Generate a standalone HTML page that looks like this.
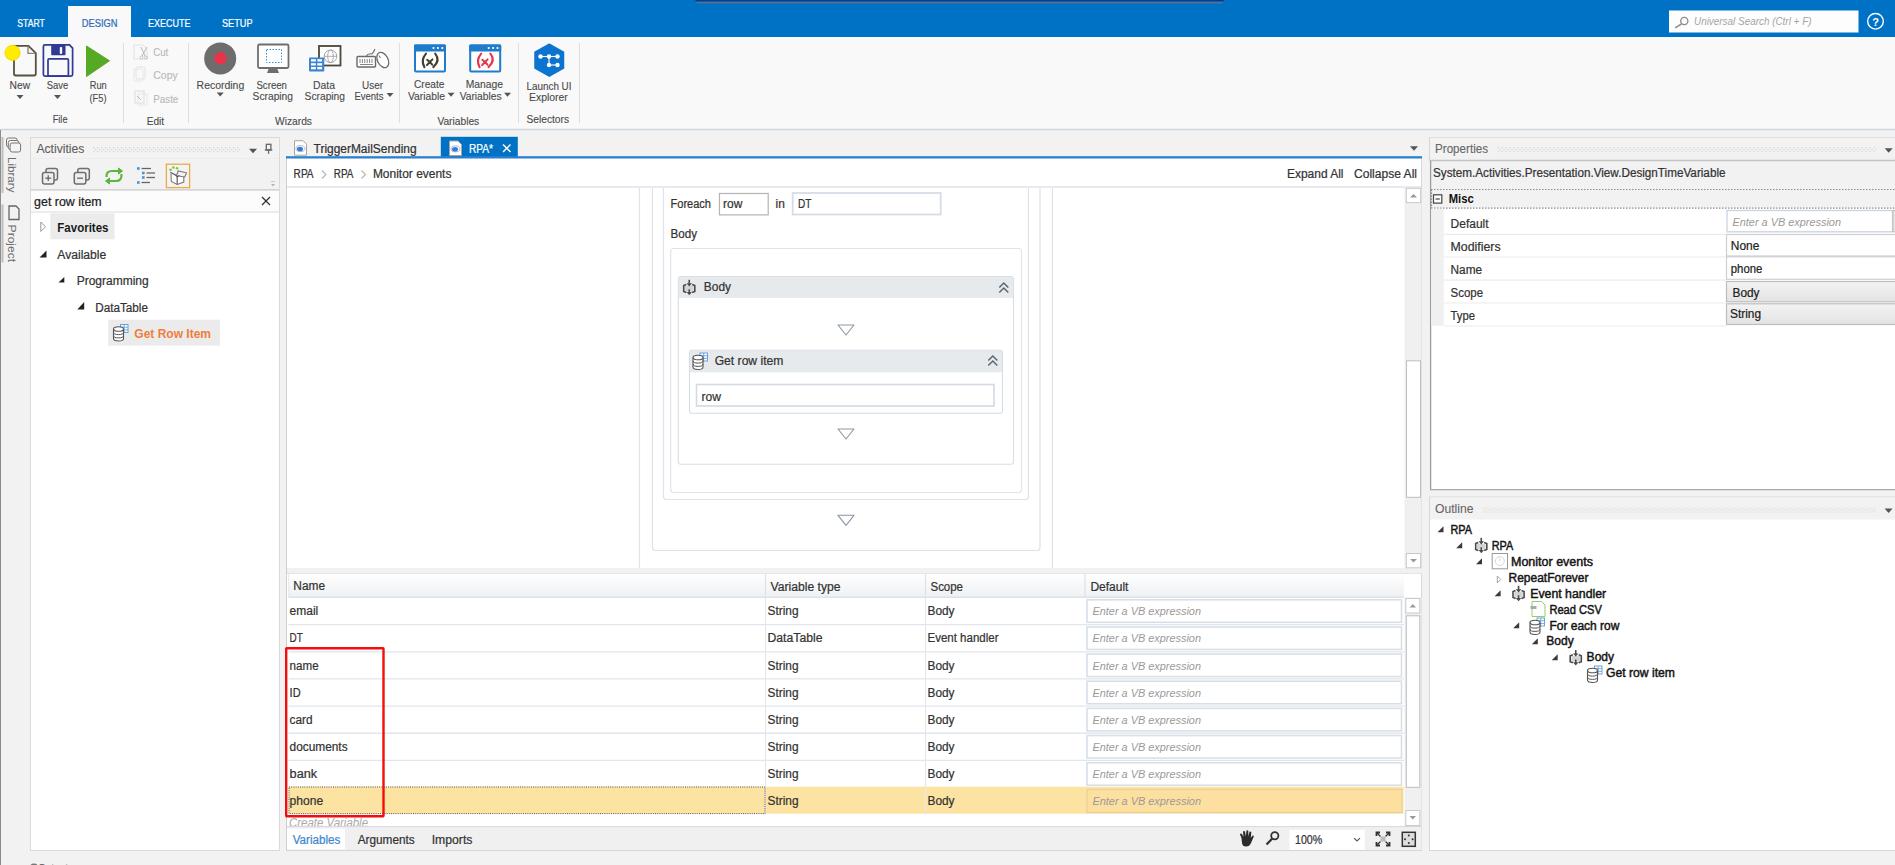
<!DOCTYPE html><html><head><meta charset="utf-8"><style>html,body{margin:0;padding:0;width:1895px;height:865px;overflow:hidden;background:#f2f2f2}svg{display:block;font-family:"Liberation Sans",sans-serif}</style></head><body><svg width="1895" height="865" viewBox="0 0 1895 865"><rect x="0" y="0" width="1895" height="865" fill="#f2f2f2"/>
<rect x="0" y="0" width="1895" height="37" fill="#0072c6"/>
<linearGradient id="tb" x1="0" y1="0" x2="0" y2="1"><stop offset="0" stop-color="#003f8f"/><stop offset="0.3" stop-color="#003f8f"/><stop offset="0.5" stop-color="#4474b4"/><stop offset="0.75" stop-color="#5a7090"/><stop offset="1" stop-color="#2a68a0"/></linearGradient>
<path d="M695,0 L1224.5,0 L1222,3.8 L697.5,3.8 Z" fill="url(#tb)"/>
<rect x="68" y="6" width="63" height="31" fill="#f9f9f9"/>
<text x="17.3" y="26.6" font-size="10.6" fill="#fff" stroke="#fff" stroke-width="0.22" textLength="27.5" lengthAdjust="spacingAndGlyphs">START</text>
<text x="81.8" y="26.6" font-size="10.6" fill="#2b6cb5" stroke="#2b6cb5" stroke-width="0.22" textLength="35.8" lengthAdjust="spacingAndGlyphs">DESIGN</text>
<text x="148" y="26.6" font-size="10.6" fill="#fff" stroke="#fff" stroke-width="0.22" textLength="42.5" lengthAdjust="spacingAndGlyphs">EXECUTE</text>
<text x="222" y="26.6" font-size="10.6" fill="#fff" stroke="#fff" stroke-width="0.22" textLength="30.5" lengthAdjust="spacingAndGlyphs">SETUP</text>
<rect x="1669" y="10.5" width="189.5" height="22" fill="#fdfdfd"/>
<circle cx="1684.3" cy="21" r="3.6" fill="none" stroke="#8a8a8a" stroke-width="1.3"/>
<line x1="1681.5" y1="23.8" x2="1675.3" y2="27.8" stroke="#8a8a8a" stroke-width="1.6"/>
<text x="1694" y="25.4" font-size="11" fill="#a5a5a5" textLength="117.5" lengthAdjust="spacingAndGlyphs" font-style="italic">Universal Search (Ctrl + F)</text>
<circle cx="1875.5" cy="21.3" r="7.8" fill="none" stroke="#fff" stroke-width="1.4"/>
<text x="1875.5" y="25.5" font-size="11" fill="#fff" font-weight="bold" text-anchor="middle">?</text>
<rect x="0" y="37" width="1895" height="92" fill="#f9f9f9"/>
<line x1="0" y1="129.5" x2="1895" y2="129.5" stroke="#cdd6df" stroke-width="1.5"/>
<line x1="123.5" y1="43" x2="123.5" y2="123" stroke="#dedede" stroke-width="1"/>
<line x1="188.5" y1="43" x2="188.5" y2="123" stroke="#dedede" stroke-width="1"/>
<line x1="399.5" y1="43" x2="399.5" y2="123" stroke="#dedede" stroke-width="1"/>
<line x1="518.5" y1="43" x2="518.5" y2="123" stroke="#dedede" stroke-width="1"/>
<line x1="579.5" y1="43" x2="579.5" y2="123" stroke="#dedede" stroke-width="1"/>
<path d="M14,45.8 L28.5,45.8 L35.8,53.2 L35.8,73.8 Q35.8,75.5 34,75.5 L15.8,75.5 Q14,75.5 14,73.8 Z" fill="#f9f9f9" stroke="#57523f" stroke-width="1.8"/>
<path d="M28,46 L28,53.4 L35.5,53.4" fill="none" stroke="#8a8676" stroke-width="1.4"/>
<circle cx="12.5" cy="52.8" r="7.6" fill="#ffec00" stroke="#f5d300" stroke-width="0.8"/>
<text x="9.6" y="89.3" font-size="11" fill="#4a4a4a" stroke="#4a4a4a" stroke-width="0.12" textLength="20.5" lengthAdjust="spacingAndGlyphs">New</text>
<path d="M16.5,95.0 L23.5,95.0 L20,99.0 Z" fill="#555"/>
<path d="M45,44.9 L69.5,44.9 L72.6,48.2 L72.6,74.6 Q72.6,76.2 71,76.2 L45,76.2 Q43.4,76.2 43.4,74.6 L43.4,46.5 Q43.4,44.9 45,44.9 Z" fill="none" stroke="#2e3a94" stroke-width="1.7"/>
<rect x="51.2" y="44.9" width="14.3" height="10.3" fill="#2e3a94" rx="1"/>
<rect x="59.8" y="47" width="2.4" height="6.9" fill="#f9f9f9" rx="0.8"/>
<rect x="48" y="58.9" width="20.4" height="17.3" fill="none" stroke="#2e3a94" stroke-width="1.7" rx="1.2"/>
<text x="46.8" y="89.3" font-size="11" fill="#4a4a4a" stroke="#4a4a4a" stroke-width="0.12" textLength="21.5" lengthAdjust="spacingAndGlyphs">Save</text>
<path d="M54.0,95.0 L61.0,95.0 L57.5,99.0 Z" fill="#555"/>
<path d="M86.5,46 L109.5,60.8 L86.5,76.5 Z" fill="#56a922" stroke="#56a922" stroke-width="1" stroke-linejoin="round"/>
<text x="89.7" y="89.3" font-size="11" fill="#4a4a4a" stroke="#4a4a4a" stroke-width="0.12" textLength="17" lengthAdjust="spacingAndGlyphs">Run</text>
<text x="89.5" y="101.8" font-size="11" fill="#4a4a4a" stroke="#4a4a4a" stroke-width="0.12" textLength="17" lengthAdjust="spacingAndGlyphs">(F5)</text>
<text x="52.7" y="123" font-size="11" fill="#4a4a4a" stroke="#4a4a4a" stroke-width="0.12" textLength="14.8" lengthAdjust="spacingAndGlyphs">File</text>
<path d="M134,45 L143,45 L147,49 L147,59 L134,59 Z" fill="none" stroke="#e2e2e2" stroke-width="1"/>
<line x1="141" y1="47" x2="145" y2="56" stroke="#b8b8b8" stroke-width="1"/>
<line x1="147" y1="47" x2="142" y2="56" stroke="#b8b8b8" stroke-width="1"/>
<circle cx="141.5" cy="57.5" r="1.5" fill="none" stroke="#b8b8b8" stroke-width="0.8"/><circle cx="146" cy="57.5" r="1.5" fill="none" stroke="#b8b8b8" stroke-width="0.8"/>
<text x="153.3" y="56" font-size="11" fill="#b8b8b8" stroke="#b8b8b8" stroke-width="0.12" textLength="15" lengthAdjust="spacingAndGlyphs">Cut</text>
<rect x="136" y="67" width="9" height="12" fill="none" stroke="#e2e2e2" stroke-width="1" rx="1.5"/>
<rect x="134" y="69" width="9" height="12" fill="none" stroke="#e6e6e6" stroke-width="1" rx="1.5"/>
<text x="153.3" y="79" font-size="11" fill="#b8b8b8" stroke="#b8b8b8" stroke-width="0.12" textLength="24.5" lengthAdjust="spacingAndGlyphs">Copy</text>
<rect x="135" y="91" width="9" height="12" fill="none" stroke="#dcdcdc" stroke-width="1"/>
<rect x="138" y="94" width="9" height="11" fill="none" stroke="#e6e6e6" stroke-width="1"/>
<line x1="137" y1="96" x2="141" y2="100" stroke="#b8b8b8" stroke-width="1"/>
<text x="153.3" y="103" font-size="11" fill="#b8b8b8" stroke="#b8b8b8" stroke-width="0.12" textLength="25" lengthAdjust="spacingAndGlyphs">Paste</text>
<text x="146.7" y="125" font-size="11" fill="#4a4a4a" stroke="#4a4a4a" stroke-width="0.12" textLength="17.3" lengthAdjust="spacingAndGlyphs">Edit</text>
<circle cx="220.2" cy="58.4" r="16" fill="#6d6d6d"/><circle cx="220.5" cy="58.3" r="6.2" fill="#e8334a"/>
<text x="196.6" y="88.8" font-size="11" fill="#4a4a4a" stroke="#4a4a4a" stroke-width="0.12" textLength="47.6" lengthAdjust="spacingAndGlyphs">Recording</text>
<path d="M216.7,92.6 L223.7,92.6 L220.2,96.6 Z" fill="#555"/>
<rect x="258" y="44.5" width="30.5" height="23.5" fill="#fff" stroke="#6e6e6e" stroke-width="1.8" rx="1.5"/>
<rect x="266.5" y="49.5" width="15" height="13" fill="none" stroke="#3f8fd8" stroke-width="1" stroke-dasharray="1.5,1.5"/>
<path d="M269,68 L277,68 L279,73 L267,73 Z" fill="#6e6e6e"/>
<text x="256.4" y="88.8" font-size="11" fill="#4a4a4a" stroke="#4a4a4a" stroke-width="0.12" textLength="30.6" lengthAdjust="spacingAndGlyphs">Screen</text>
<text x="252.6" y="99.8" font-size="11" fill="#4a4a4a" stroke="#4a4a4a" stroke-width="0.12" textLength="40.4" lengthAdjust="spacingAndGlyphs">Scraping</text>
<rect x="319" y="46" width="21.5" height="19.5" fill="#fff" stroke="#4a4638" stroke-width="1.8"/>
<circle cx="330.5" cy="56.3" r="6.3" fill="none" stroke="#9a9a9a" stroke-width="0.9"/>
<ellipse cx="330.5" cy="56.3" rx="2.8" ry="6.3" fill="none" stroke="#9a9a9a" stroke-width="0.8"/>
<line x1="324.2" y1="56.3" x2="336.8" y2="56.3" stroke="#9a9a9a" stroke-width="0.8"/>
<rect x="309" y="57.5" width="15.3" height="14" fill="#3d84d1" rx="1"/>
<rect x="311" y="59.2" width="4.8" height="2.3" fill="#fff"/>
<rect x="317.3" y="59.2" width="4.8" height="2.3" fill="#fff"/>
<rect x="311" y="63.2" width="4.8" height="2.3" fill="#fff"/>
<rect x="317.3" y="63.2" width="4.8" height="2.3" fill="#fff"/>
<rect x="311" y="67.0" width="4.8" height="2.3" fill="#fff"/>
<rect x="317.3" y="67.0" width="4.8" height="2.3" fill="#fff"/>
<text x="313" y="88.8" font-size="11" fill="#4a4a4a" stroke="#4a4a4a" stroke-width="0.12" textLength="22" lengthAdjust="spacingAndGlyphs">Data</text>
<text x="304.6" y="99.8" font-size="11" fill="#4a4a4a" stroke="#4a4a4a" stroke-width="0.12" textLength="40.4" lengthAdjust="spacingAndGlyphs">Scraping</text>
<rect x="357" y="56.5" width="18.5" height="10.5" fill="#fff" stroke="#6a6a6a" stroke-width="1.4" rx="1"/>
<line x1="360.0" y1="59" x2="360.0" y2="63" stroke="#777" stroke-width="0.9"/>
<line x1="362.4" y1="59" x2="362.4" y2="63" stroke="#777" stroke-width="0.9"/>
<line x1="364.8" y1="59" x2="364.8" y2="63" stroke="#777" stroke-width="0.9"/>
<line x1="367.2" y1="59" x2="367.2" y2="63" stroke="#777" stroke-width="0.9"/>
<line x1="369.6" y1="59" x2="369.6" y2="63" stroke="#777" stroke-width="0.9"/>
<line x1="372.0" y1="59" x2="372.0" y2="63" stroke="#777" stroke-width="0.9"/>
<line x1="360" y1="64.5" x2="373" y2="64.5" stroke="#777" stroke-width="0.9"/>
<path d="M366,56.5 Q368,53 372,54 Q374,51.5 375,49" fill="none" stroke="#6a6a6a" stroke-width="1.1"/>
<ellipse cx="382.8" cy="60" rx="5.2" ry="8.2" transform="rotate(-28 382.8 60)" fill="#fff" stroke="#6a6a6a" stroke-width="1.3"/>
<line x1="379" y1="55.5" x2="380.5" y2="58" stroke="#6a6a6a" stroke-width="1"/>
<text x="362" y="88.8" font-size="11" fill="#4a4a4a" stroke="#4a4a4a" stroke-width="0.12" textLength="21" lengthAdjust="spacingAndGlyphs">User</text>
<text x="354.5" y="99.8" font-size="11" fill="#4a4a4a" stroke="#4a4a4a" stroke-width="0.12" textLength="29" lengthAdjust="spacingAndGlyphs">Events</text>
<path d="M386.5,93.0 L393.5,93.0 L390,97.0 Z" fill="#555"/>
<text x="275" y="125.4" font-size="11" fill="#4a4a4a" stroke="#4a4a4a" stroke-width="0.12" textLength="37" lengthAdjust="spacingAndGlyphs">Wizards</text>
<rect x="415" y="45.5" width="30" height="26" fill="#fff" stroke="#1f7bcb" stroke-width="2" rx="1"/>
<rect x="414" y="44.5" width="32" height="7" fill="#1f7bcb" rx="1"/>
<circle cx="433.5" cy="48" r="1.1" fill="#fff"/>
<circle cx="437.9" cy="48" r="1.1" fill="#fff"/>
<circle cx="442.3" cy="48" r="1.1" fill="#fff"/>
<path d="M426,53.6 Q420.3,60.4 424.4,67.1 M435.2,53.6 Q440.7,60.4 433.3,67.1" fill="none" stroke="#44402f" stroke-width="2.1" stroke-linecap="round"/>
<path d="M427.2,59.8 Q430,61.5 432.2,64.6 M432.4,59.4 Q429.5,61.8 427,65.2" fill="none" stroke="#44402f" stroke-width="2" stroke-linecap="round"/>
<text x="414" y="88.2" font-size="11" fill="#4a4a4a" stroke="#4a4a4a" stroke-width="0.12" textLength="30.5" lengthAdjust="spacingAndGlyphs">Create</text>
<text x="408" y="99.6" font-size="11" fill="#4a4a4a" stroke="#4a4a4a" stroke-width="0.12" textLength="37" lengthAdjust="spacingAndGlyphs">Variable</text>
<path d="M447.5,92.7 L454.5,92.7 L451,96.7 Z" fill="#555"/>
<rect x="470.2" y="45.5" width="30" height="26" fill="#fff" stroke="#1f7bcb" stroke-width="2" rx="1"/>
<rect x="469.2" y="44.5" width="32" height="7" fill="#1f7bcb" rx="1"/>
<circle cx="488.7" cy="48" r="1.1" fill="#fff"/>
<circle cx="493.09999999999997" cy="48" r="1.1" fill="#fff"/>
<circle cx="497.5" cy="48" r="1.1" fill="#fff"/>
<path d="M481.2,53.6 Q475.5,60.4 479.59999999999997,67.1 M490.4,53.6 Q495.9,60.4 488.5,67.1" fill="none" stroke="#e8334a" stroke-width="2.1" stroke-linecap="round"/>
<path d="M482.4,59.8 Q485.2,61.5 487.4,64.6 M487.59999999999997,59.4 Q484.7,61.8 482.2,65.2" fill="none" stroke="#e8334a" stroke-width="2" stroke-linecap="round"/>
<text x="465.7" y="88.2" font-size="11" fill="#4a4a4a" stroke="#4a4a4a" stroke-width="0.12" textLength="37.3" lengthAdjust="spacingAndGlyphs">Manage</text>
<text x="459.7" y="99.6" font-size="11" fill="#4a4a4a" stroke="#4a4a4a" stroke-width="0.12" textLength="41.8" lengthAdjust="spacingAndGlyphs">Variables</text>
<path d="M504.0,92.7 L511.0,92.7 L507.5,96.7 Z" fill="#555"/>
<text x="437.4" y="125" font-size="11" fill="#4a4a4a" stroke="#4a4a4a" stroke-width="0.12" textLength="41.8" lengthAdjust="spacingAndGlyphs">Variables</text>
<path d="M549.3,44.2 L563.5,52.2 L563.5,68.2 L549.3,76.2 L535,68.2 L535,52.2 Z" fill="#0c74cf" stroke="#0c74cf" stroke-width="1.5" stroke-linejoin="round"/>
<circle cx="540.5" cy="56.5" r="2.2" fill="#fff"/>
<circle cx="549" cy="56.5" r="2.2" fill="#fff"/>
<circle cx="557.5" cy="56.5" r="2.2" fill="#fff"/>
<circle cx="549" cy="65" r="2.2" fill="#fff"/>
<circle cx="557.5" cy="65" r="2.2" fill="#fff"/>
<line x1="540.5" y1="56.5" x2="557.5" y2="56.5" stroke="#fff" stroke-width="1.1"/>
<line x1="549" y1="56.5" x2="549" y2="65" stroke="#fff" stroke-width="1.1"/>
<line x1="549" y1="65" x2="557.5" y2="65" stroke="#fff" stroke-width="1.1"/>
<text x="526.5" y="89.8" font-size="11" fill="#4a4a4a" stroke="#4a4a4a" stroke-width="0.12" textLength="45" lengthAdjust="spacingAndGlyphs">Launch UI</text>
<text x="529" y="101.2" font-size="11" fill="#4a4a4a" stroke="#4a4a4a" stroke-width="0.12" textLength="38.8" lengthAdjust="spacingAndGlyphs">Explorer</text>
<text x="526.5" y="123" font-size="11" fill="#4a4a4a" stroke="#4a4a4a" stroke-width="0.12" textLength="42.5" lengthAdjust="spacingAndGlyphs">Selectors</text>
<rect x="0" y="130" width="1" height="735" fill="#8c8c8c"/>
<rect x="1.5" y="137" width="2" height="56" fill="#bdbdbd"/>
<rect x="1.5" y="204.5" width="2" height="58" fill="#bdbdbd"/>
<rect x="6.5" y="138.0" width="10.5" height="9" fill="#f4f4f4" stroke="#777" stroke-width="1" rx="2"/>
<rect x="8.3" y="140.5" width="10.5" height="9" fill="#f4f4f4" stroke="#777" stroke-width="1" rx="2"/>
<rect x="10.1" y="143.0" width="10.5" height="9" fill="#f4f4f4" stroke="#777" stroke-width="1" rx="2"/>
<text x="0" y="0" font-size="11.5" fill="#6a6a6a" textLength="35.5" lengthAdjust="spacingAndGlyphs" transform="translate(8.3,157) rotate(90)">Library</text>
<path d="M9,206 L16,206 L19,209 L19,219.5 L9,219.5 Z" fill="none" stroke="#666" stroke-width="1.3"/>
<text x="0" y="0" font-size="11.5" fill="#6a6a6a" textLength="37.5" lengthAdjust="spacingAndGlyphs" transform="translate(8.3,224.6) rotate(90)">Project</text>
<circle cx="34" cy="868.5" r="5" fill="#777"/>
<text x="38" y="872.2" font-size="11.5" fill="#555" stroke="#555" stroke-width="0.22" textLength="30" lengthAdjust="spacingAndGlyphs">Output</text>
<rect x="30.5" y="137.5" width="249" height="713" fill="#fff" stroke="#dadada" stroke-width="1"/>
<rect x="31" y="138" width="248" height="22" fill="#f3f3f3"/>
<text x="36.4" y="153.4" font-size="12" fill="#606060" stroke="#606060" stroke-width="0.1" textLength="48" lengthAdjust="spacingAndGlyphs">Activities</text>
<pattern id="g1" x="93" y="147" width="4" height="4" patternUnits="userSpaceOnUse"><rect width="4" height="4" fill="#f2f2f2"/><rect x="0" y="0" width="1.3" height="1.3" fill="#d6d6d6"/><rect x="2" y="2" width="1.3" height="1.3" fill="#d6d6d6"/></pattern>
<rect x="93" y="147" width="147" height="5.4" fill="url(#g1)"/>
<path d="M249.0,148.75 L257.0,148.75 L253,153.25 Z" fill="#555"/>
<rect x="266.3" y="144.3" width="4.6" height="5.5" fill="none" stroke="#666" stroke-width="1.3"/>
<line x1="264.8" y1="150" x2="272.3" y2="150" stroke="#666" stroke-width="1.3"/>
<line x1="268.6" y1="150" x2="268.6" y2="153.8" stroke="#666" stroke-width="1.3"/>
<rect x="31" y="160" width="248" height="29.5" fill="#f2f2f2"/>
<line x1="31" y1="158.5" x2="279" y2="158.5" stroke="#ececec" stroke-width="1"/>
<rect x="46" y="168.5" width="11.5" height="11.5" fill="#eee" stroke="#6e6e6e" stroke-width="1.5" rx="2"/>
<rect x="42.5" y="172.5" width="11.5" height="11.5" fill="#eee" stroke="#6e6e6e" stroke-width="1.5" rx="2"/>
<line x1="45.3" y1="178.2" x2="51.2" y2="178.2" stroke="#6e6e6e" stroke-width="1.4"/>
<line x1="48.25" y1="175.3" x2="48.25" y2="181.1" stroke="#6e6e6e" stroke-width="1.4"/>
<rect x="77.8" y="168.5" width="11.5" height="11.5" fill="#eee" stroke="#6e6e6e" stroke-width="1.5" rx="2"/>
<rect x="74.3" y="172.5" width="11.5" height="11.5" fill="#eee" stroke="#6e6e6e" stroke-width="1.5" rx="2"/>
<line x1="77.1" y1="178.2" x2="83.0" y2="178.2" stroke="#6e6e6e" stroke-width="1.4"/>
<path d="M106.5,177 Q106,171 112,171 L120.5,171" fill="none" stroke="#5cb63c" stroke-width="2.2"/>
<path d="M118.5,168 L122.5,171 L118.5,174 Z" fill="#5cb63c" stroke="#5cb63c" stroke-width="1"/>
<path d="M121.5,174 Q122,181 116,181 L107.5,181" fill="none" stroke="#5cb63c" stroke-width="2.2"/>
<path d="M109.5,178 L105.5,181 L109.5,184 Z" fill="#5cb63c" stroke="#5cb63c" stroke-width="1"/>
<rect x="137" y="167.2" width="2.6" height="2.6" fill="#4a90e2"/>
<line x1="141.5" y1="168.5" x2="151" y2="168.5" stroke="#666" stroke-width="1.3"/>
<rect x="142" y="171.7" width="2.6" height="2.6" fill="#4a90e2"/>
<line x1="146.5" y1="173" x2="155" y2="173" stroke="#666" stroke-width="1.3"/>
<rect x="142" y="176.2" width="2.6" height="2.6" fill="#4a90e2"/>
<line x1="146.5" y1="177.5" x2="155" y2="177.5" stroke="#666" stroke-width="1.3"/>
<rect x="137" y="181.2" width="2.6" height="2.6" fill="#4a90e2"/>
<line x1="141.5" y1="182.5" x2="150" y2="182.5" stroke="#666" stroke-width="1.3"/>
<rect x="166.4" y="164.2" width="23.2" height="23.4" fill="#f3f3f3" stroke="#eaa94a" stroke-width="1.3"/>
<path d="M171,174 L171.3,181.5 L177.2,184.5 L183.8,182 L183.8,176" fill="#fff" stroke="#7a7a7a" stroke-width="1.1"/>
<path d="M177.2,176 L177.2,184.5" fill="none" stroke="#6a6a6a" stroke-width="1.3"/>
<path d="M170.3,172.3 L177.2,175.8 L182.5,174.2" fill="none" stroke="#6a6a6a" stroke-width="1.3"/>
<path d="M176.5,175.5 L178.2,171 L186.5,172.8 L184.8,177 L178,176" fill="#f3f3f3" stroke="#7a7a7a" stroke-width="1.1"/>
<path d="M174.5,174.5 L177.2,175.8 L180.5,175 L177.2,177.5 Z" fill="#555"/>
<circle cx="170.5" cy="169.8" r="1.3" fill="#7ac943"/>
<circle cx="173.4" cy="167.5" r="1.3" fill="#7ac943"/>
<circle cx="177.1" cy="168.3" r="1.3" fill="#7ac943"/>
<path d="M271,184 L275,184 L273,186.5 Z" fill="#b0b0b0"/>
<line x1="271" y1="181.5" x2="275" y2="181.5" stroke="#c0c0c0" stroke-width="0.8"/>
<line x1="31" y1="190" x2="279" y2="190" stroke="#c9c9c9" stroke-width="1.5"/>
<rect x="31" y="190.7" width="248" height="21" fill="#fcfcfc"/>
<line x1="31" y1="212" x2="279" y2="212" stroke="#dcdcdc" stroke-width="1.2"/>
<text x="34.1" y="206.3" font-size="12" fill="#222" stroke="#222" stroke-width="0.22" textLength="67.6" lengthAdjust="spacingAndGlyphs">get row item</text>
<line x1="262" y1="197" x2="270" y2="205" stroke="#333" stroke-width="1.3"/>
<line x1="270" y1="197" x2="262" y2="205" stroke="#333" stroke-width="1.3"/>
<rect x="50.3" y="213.3" width="64.2" height="26" fill="#ebebeb"/>
<path d="M40.8,222 L45.5,226.8 L40.8,231.5 Z" fill="none" stroke="#9a9a9a" stroke-width="1"/>
<text x="57.3" y="231.5" font-size="12" fill="#1a1a1a" textLength="51.2" lengthAdjust="spacingAndGlyphs" font-weight="bold">Favorites</text>
<path d="M46.5,250.6 L46.5,257.6 L39.5,257.6 Z" fill="#222"/>
<text x="57.3" y="259.3" font-size="12" fill="#333" stroke="#333" stroke-width="0.22" textLength="49" lengthAdjust="spacingAndGlyphs">Available</text>
<path d="M64.3,277 L64.3,282.6 L58.5,282.6 Z" fill="#222"/>
<text x="76.7" y="285.4" font-size="12" fill="#333" stroke="#333" stroke-width="0.22" textLength="72" lengthAdjust="spacingAndGlyphs">Programming</text>
<path d="M84.2,302 L84.2,309.4 L77.3,309.4 Z" fill="#222"/>
<text x="95.2" y="311.5" font-size="12" fill="#333" stroke="#333" stroke-width="0.22" textLength="52.8" lengthAdjust="spacingAndGlyphs">DataTable</text>
<rect x="108.2" y="319.7" width="111.8" height="26" fill="#ebebeb"/>
<g transform="translate(112.5,324) scale(1.0)"><rect x="8" y="0.5" width="7.5" height="8" fill="#fff" stroke="#5b9bd5" stroke-width="0.9"/><line x1="11.7" y1="0.5" x2="11.7" y2="8.5" stroke="#5b9bd5" stroke-width="0.8"/><line x1="8" y1="3.2" x2="15.5" y2="3.2" stroke="#5b9bd5" stroke-width="0.8"/><line x1="8" y1="5.9" x2="15.5" y2="5.9" stroke="#5b9bd5" stroke-width="0.8"/><path d="M1,5 L1,14.5 Q1,17 6,17 Q11,17 11,14.5 L11,5" fill="#fff" stroke="#555" stroke-width="1.1"/><ellipse cx="6" cy="5" rx="5" ry="2.3" fill="#fff" stroke="#555" stroke-width="1.1"/><path d="M1,8.3 Q1,10.6 6,10.6 Q11,10.6 11,8.3 M1,11.6 Q1,13.9 6,13.9 Q11,13.9 11,11.6" fill="none" stroke="#555" stroke-width="1"/></g>
<text x="134.3" y="337.5" font-size="12" fill="#f07d3e" textLength="76.7" lengthAdjust="spacingAndGlyphs" font-weight="bold">Get Row Item</text>
<rect x="286" y="158" width="1136" height="692.5" fill="#fff"/>
<line x1="286.5" y1="156" x2="286.5" y2="851" stroke="#cfcfcf" stroke-width="1"/>
<line x1="1421.5" y1="158" x2="1421.5" y2="851" stroke="#d8d8d8" stroke-width="1"/>
<line x1="286" y1="850.5" x2="1422" y2="850.5" stroke="#d6d6d6" stroke-width="1"/>
<g transform="translate(294,140.2)"><path d="M0.5,0.5 L9,0.5 L12.5,4 L12.5,15 L0.5,15 Z" fill="#fff" stroke="#a5a5a5" stroke-width="1"/><ellipse cx="6.5" cy="8.3" rx="4.5" ry="3" fill="none" stroke="#9ab" stroke-width="0.8"/><ellipse cx="6" cy="8.8" rx="3" ry="2.3" fill="#2f7de0"/></g>
<text x="313.6" y="152.6" font-size="12" fill="#333" stroke="#333" stroke-width="0.22" textLength="103" lengthAdjust="spacingAndGlyphs">TriggerMailSending</text>
<rect x="440.8" y="136.8" width="77" height="21" fill="#0072c6"/>
<g transform="translate(449,140.5)"><path d="M0.5,0.5 L9,0.5 L12.5,4 L12.5,15 L0.5,15 Z" fill="#fff" stroke="#a5a5a5" stroke-width="1"/><ellipse cx="6.5" cy="8.3" rx="4.5" ry="3" fill="none" stroke="#9ab" stroke-width="0.8"/><ellipse cx="6" cy="8.8" rx="3" ry="2.3" fill="#2f7de0"/></g>
<text x="469" y="152.6" font-size="12" fill="#fff" stroke="#fff" stroke-width="0.22" textLength="24" lengthAdjust="spacingAndGlyphs">RPA*</text>
<line x1="503" y1="144.5" x2="510.5" y2="152" stroke="#fff" stroke-width="1.4"/>
<line x1="510.5" y1="144.5" x2="503" y2="152" stroke="#fff" stroke-width="1.4"/>
<path d="M1410.0,146.25 L1418.0,146.25 L1414,150.75 Z" fill="#555"/>
<rect x="286" y="156.2" width="1136" height="2.3" fill="#2a7fcf"/>
<text x="293.6" y="178" font-size="12" fill="#333" stroke="#333" stroke-width="0.22" textLength="20" lengthAdjust="spacingAndGlyphs">RPA</text>
<path d="M322,170.5 L326,174.5 L322,178.5" fill="none" stroke="#b5b5b5" stroke-width="1.1"/>
<text x="333.8" y="178" font-size="12" fill="#333" stroke="#333" stroke-width="0.22" textLength="19.6" lengthAdjust="spacingAndGlyphs">RPA</text>
<path d="M361.5,170.5 L365.5,174.5 L361.5,178.5" fill="none" stroke="#b5b5b5" stroke-width="1.1"/>
<text x="372.9" y="178" font-size="12" fill="#333" stroke="#333" stroke-width="0.22" textLength="78.5" lengthAdjust="spacingAndGlyphs">Monitor events</text>
<text x="1287" y="177.5" font-size="12" fill="#333" stroke="#333" stroke-width="0.22" textLength="56.5" lengthAdjust="spacingAndGlyphs">Expand All</text>
<text x="1354" y="177.5" font-size="12" fill="#333" stroke="#333" stroke-width="0.22" textLength="63" lengthAdjust="spacingAndGlyphs">Collapse All</text>
<line x1="287" y1="187" x2="1421" y2="187" stroke="#dfe5ec" stroke-width="1.5"/>
<g>
<line x1="639.5" y1="188" x2="639.5" y2="568" stroke="#dde3ea" stroke-width="1.2"/>
<line x1="1052.5" y1="188" x2="1052.5" y2="568" stroke="#dde3ea" stroke-width="1.2"/>
<path d="M652.5,188 L652.5,547.5 Q652.5,550.5 655.5,550.5 L1037,550.5 Q1040,550.5 1040,547.5 L1040,188" fill="none" stroke="#dde3ea" stroke-width="1.2"/>
<path d="M663.5,188 L663.5,496.5 Q663.5,499.5 666.5,499.5 L1025.5,499.5 Q1028.5,499.5 1028.5,496.5 L1028.5,188" fill="none" stroke="#dde3ea" stroke-width="1.2"/>
<text x="670.5" y="208.3" font-size="12" fill="#333" stroke="#333" stroke-width="0.22" textLength="40.5" lengthAdjust="spacingAndGlyphs">Foreach</text>
<rect x="719.5" y="193.5" width="48.7" height="21.4" fill="#fff" stroke="#b3b3b3" stroke-width="1.2"/>
<text x="723" y="208.3" font-size="12" fill="#333" stroke="#333" stroke-width="0.22" textLength="19.3" lengthAdjust="spacingAndGlyphs">row</text>
<text x="775.6" y="208" font-size="12" fill="#333" stroke="#333" stroke-width="0.22" textLength="9.3" lengthAdjust="spacingAndGlyphs">in</text>
<rect x="792.7" y="193" width="148" height="21.5" fill="#fff" stroke="#d6dde6" stroke-width="1.8"/>
<text x="798" y="208.3" font-size="12" fill="#333" stroke="#333" stroke-width="0.22" textLength="13.4" lengthAdjust="spacingAndGlyphs">DT</text>
<text x="670.5" y="238.2" font-size="12" fill="#333" stroke="#333" stroke-width="0.22" textLength="26.5" lengthAdjust="spacingAndGlyphs">Body</text>
<rect x="670.7" y="248.5" width="350.8" height="244" fill="#fff" stroke="#e0e3e7" stroke-width="1.1" rx="3"/>
<rect x="678.3" y="276.5" width="335.2" height="187.7" fill="#fff" stroke="#d9dee4" stroke-width="1.1" rx="2.5"/>
<rect x="678.9" y="277.1" width="334" height="20.5" fill="#e7eaed"/>
<line x1="678.9" y1="297.5" x2="1013" y2="297.5" stroke="#e9ecef" stroke-width="1"/>
<g transform="translate(682.5,279.8)"><rect x="2.5" y="6" width="8.5" height="5.5" fill="#d4d4d4"/><path d="M3.8,4.7 L1.2,5.8 L1.2,11.7 L3.8,12.8 M9.7,4.7 L12.3,5.8 L12.3,11.7 L9.7,12.8" fill="none" stroke="#4a4a4a" stroke-width="1.6"/><path d="M6.75,0 L6.75,4" stroke="#4a4a4a" stroke-width="1.6"/><path d="M4,3.4 L9.5,3.4 L6.75,6.6 Z" fill="#4a4a4a"/><path d="M6.75,9.5 L6.75,13" stroke="#4a4a4a" stroke-width="1.6"/><path d="M4,12.3 L9.5,12.3 L6.75,15.5 Z" fill="#4a4a4a"/></g>
<text x="703.8" y="290.7" font-size="12" fill="#333" stroke="#333" stroke-width="0.22" textLength="27.2" lengthAdjust="spacingAndGlyphs">Body</text>
<path d="M999.3,287.5 L1003.8,283 L1008.3,287.5 M999.3,292.5 L1003.8,288 L1008.3,292.5" fill="none" stroke="#5d6670" stroke-width="1.5"/>
<path d="M838,325 L854,325 L846,335 Z" fill="#fff" stroke="#8c97a3" stroke-width="1.1" stroke-linejoin="round"/>
<rect x="689.5" y="350.3" width="313" height="63" fill="#fff" stroke="#d6dce3" stroke-width="1.1" rx="2.5"/>
<rect x="690.1" y="350.9" width="311.8" height="21.4" fill="#e7eaed"/>
<g transform="translate(692,352.5) scale(1.0)"><rect x="8" y="0.5" width="7.5" height="8" fill="#fff" stroke="#5b9bd5" stroke-width="0.9"/><line x1="11.7" y1="0.5" x2="11.7" y2="8.5" stroke="#5b9bd5" stroke-width="0.8"/><line x1="8" y1="3.2" x2="15.5" y2="3.2" stroke="#5b9bd5" stroke-width="0.8"/><line x1="8" y1="5.9" x2="15.5" y2="5.9" stroke="#5b9bd5" stroke-width="0.8"/><path d="M1,5 L1,14.5 Q1,17 6,17 Q11,17 11,14.5 L11,5" fill="#fff" stroke="#555" stroke-width="1.1"/><ellipse cx="6" cy="5" rx="5" ry="2.3" fill="#fff" stroke="#555" stroke-width="1.1"/><path d="M1,8.3 Q1,10.6 6,10.6 Q11,10.6 11,8.3 M1,11.6 Q1,13.9 6,13.9 Q11,13.9 11,11.6" fill="none" stroke="#555" stroke-width="1"/></g>
<text x="714.7" y="364.5" font-size="12" fill="#333" stroke="#333" stroke-width="0.22" textLength="68.7" lengthAdjust="spacingAndGlyphs">Get row item</text>
<path d="M988.3,360.5 L992.8,356 L997.3,360.5 M988.3,365.5 L992.8,361 L997.3,365.5" fill="none" stroke="#5d6670" stroke-width="1.5"/>
<rect x="696.5" y="384.5" width="297.5" height="21.5" fill="#fff" stroke="#d3dae3" stroke-width="1.6"/>
<text x="701.6" y="401" font-size="12" fill="#333" stroke="#333" stroke-width="0.22" textLength="19.5" lengthAdjust="spacingAndGlyphs">row</text>
<path d="M838,429 L854,429 L846,439 Z" fill="#fff" stroke="#8c97a3" stroke-width="1.1" stroke-linejoin="round"/>
<path d="M838,515.3 L854,515.3 L846,525.3 Z" fill="#fff" stroke="#8c97a3" stroke-width="1.1" stroke-linejoin="round"/>
</g>
<rect x="287" y="568" width="1135" height="5.5" fill="#f1f1f1"/>
<line x1="287" y1="573.5" x2="1421" y2="573.5" stroke="#e1e6ec" stroke-width="1"/>
<rect x="1404.5" y="188" width="17" height="380" fill="#f0f0f0"/>
<rect x="1406.3" y="188.3" width="14.4" height="14.3" fill="#fff" stroke="#c9c9c9" stroke-width="1"/>
<path d="M1410,197.5 L1413.5,194 L1417,197.5 Z" fill="#9a9a9a"/>
<rect x="1406.5" y="360.8" width="14" height="136.5" fill="#fff" stroke="#bdbdbd" stroke-width="1"/>
<rect x="1406.3" y="553.5" width="14.4" height="14.3" fill="#fff" stroke="#c9c9c9" stroke-width="1"/>
<path d="M1410,559 L1417,559 L1413.5,562.5 Z" fill="#9a9a9a"/>
<linearGradient id="hdr" x1="0" y1="0" x2="0" y2="1"><stop offset="0" stop-color="#ffffff"/><stop offset="0.45" stop-color="#f7f8f9"/><stop offset="1" stop-color="#eef0f2"/></linearGradient>
<rect x="288.5" y="574" width="1115.5" height="23.5" fill="url(#hdr)"/>
<line x1="288.5" y1="597.3" x2="1404" y2="597.3" stroke="#dde2e8" stroke-width="1.4"/>
<line x1="288.8" y1="574" x2="288.8" y2="597" stroke="#e3e8ee" stroke-width="1"/>
<line x1="765.5" y1="574" x2="765.5" y2="597" stroke="#dde3ea" stroke-width="1.3"/>
<line x1="925.5" y1="574" x2="925.5" y2="597" stroke="#dde3ea" stroke-width="1.3"/>
<line x1="1085" y1="574" x2="1085" y2="597" stroke="#dde3ea" stroke-width="1.3"/>
<text x="293.3" y="590.3" font-size="12" fill="#333" stroke="#333" stroke-width="0.22" textLength="31.7" lengthAdjust="spacingAndGlyphs">Name</text>
<text x="770.5" y="590.5" font-size="12" fill="#333" stroke="#333" stroke-width="0.22" textLength="70" lengthAdjust="spacingAndGlyphs">Variable type</text>
<text x="930.5" y="590.5" font-size="12" fill="#333" stroke="#333" stroke-width="0.22" textLength="32.5" lengthAdjust="spacingAndGlyphs">Scope</text>
<text x="1090.4" y="590.8" font-size="12" fill="#333" stroke="#333" stroke-width="0.22" textLength="38" lengthAdjust="spacingAndGlyphs">Default</text>
<line x1="288.5" y1="624.65" x2="1404" y2="624.65" stroke="#e1e6ec" stroke-width="1.3"/>
<line x1="765.5" y1="597.5" x2="765.5" y2="624.65" stroke="#e4e8ee" stroke-width="1.2"/>
<line x1="925.5" y1="597.5" x2="925.5" y2="624.65" stroke="#e4e8ee" stroke-width="1.2"/>
<text x="289.6" y="615.3" font-size="12" fill="#333" stroke="#333" stroke-width="0.22" textLength="28.7" lengthAdjust="spacingAndGlyphs">email</text>
<text x="767.5" y="615.3" font-size="12" fill="#333" stroke="#333" stroke-width="0.22" textLength="31" lengthAdjust="spacingAndGlyphs">String</text>
<text x="927.5" y="615.3" font-size="12" fill="#333" stroke="#333" stroke-width="0.22" textLength="27" lengthAdjust="spacingAndGlyphs">Body</text>
<rect x="1087" y="599.8" width="314.5" height="22.5" fill="#fff" stroke="#d8dfe8" stroke-width="1.6"/>
<text x="1092.5" y="615.3" font-size="11.5" fill="#9a9a9a" textLength="108.5" lengthAdjust="spacingAndGlyphs" font-style="italic">Enter a VB expression</text>
<line x1="288.5" y1="651.8" x2="1404" y2="651.8" stroke="#e1e6ec" stroke-width="1.3"/>
<line x1="765.5" y1="624.65" x2="765.5" y2="651.8" stroke="#e4e8ee" stroke-width="1.2"/>
<line x1="925.5" y1="624.65" x2="925.5" y2="651.8" stroke="#e4e8ee" stroke-width="1.2"/>
<text x="289.6" y="642.4499999999999" font-size="12" fill="#333" stroke="#333" stroke-width="0.22" textLength="13.2" lengthAdjust="spacingAndGlyphs">DT</text>
<text x="767.5" y="642.4499999999999" font-size="12" fill="#333" stroke="#333" stroke-width="0.22" textLength="55" lengthAdjust="spacingAndGlyphs">DataTable</text>
<text x="927.5" y="642.4499999999999" font-size="12" fill="#333" stroke="#333" stroke-width="0.22" textLength="71" lengthAdjust="spacingAndGlyphs">Event handler</text>
<rect x="1087" y="626.9499999999999" width="314.5" height="22.5" fill="#fff" stroke="#d8dfe8" stroke-width="1.6"/>
<text x="1092.5" y="642.4499999999999" font-size="11.5" fill="#9a9a9a" textLength="108.5" lengthAdjust="spacingAndGlyphs" font-style="italic">Enter a VB expression</text>
<line x1="288.5" y1="678.9499999999999" x2="1404" y2="678.9499999999999" stroke="#e1e6ec" stroke-width="1.3"/>
<line x1="765.5" y1="651.8" x2="765.5" y2="678.9499999999999" stroke="#e4e8ee" stroke-width="1.2"/>
<line x1="925.5" y1="651.8" x2="925.5" y2="678.9499999999999" stroke="#e4e8ee" stroke-width="1.2"/>
<text x="289.6" y="669.5999999999999" font-size="12" fill="#333" stroke="#333" stroke-width="0.22" textLength="29" lengthAdjust="spacingAndGlyphs">name</text>
<text x="767.5" y="669.5999999999999" font-size="12" fill="#333" stroke="#333" stroke-width="0.22" textLength="31" lengthAdjust="spacingAndGlyphs">String</text>
<text x="927.5" y="669.5999999999999" font-size="12" fill="#333" stroke="#333" stroke-width="0.22" textLength="27" lengthAdjust="spacingAndGlyphs">Body</text>
<rect x="1087" y="654.0999999999999" width="314.5" height="22.5" fill="#fff" stroke="#d8dfe8" stroke-width="1.6"/>
<text x="1092.5" y="669.5999999999999" font-size="11.5" fill="#9a9a9a" textLength="108.5" lengthAdjust="spacingAndGlyphs" font-style="italic">Enter a VB expression</text>
<line x1="288.5" y1="706.1" x2="1404" y2="706.1" stroke="#e1e6ec" stroke-width="1.3"/>
<line x1="765.5" y1="678.95" x2="765.5" y2="706.1" stroke="#e4e8ee" stroke-width="1.2"/>
<line x1="925.5" y1="678.95" x2="925.5" y2="706.1" stroke="#e4e8ee" stroke-width="1.2"/>
<text x="289.6" y="696.75" font-size="12" fill="#333" stroke="#333" stroke-width="0.22" textLength="11" lengthAdjust="spacingAndGlyphs">ID</text>
<text x="767.5" y="696.75" font-size="12" fill="#333" stroke="#333" stroke-width="0.22" textLength="31" lengthAdjust="spacingAndGlyphs">String</text>
<text x="927.5" y="696.75" font-size="12" fill="#333" stroke="#333" stroke-width="0.22" textLength="27" lengthAdjust="spacingAndGlyphs">Body</text>
<rect x="1087" y="681.25" width="314.5" height="22.5" fill="#fff" stroke="#d8dfe8" stroke-width="1.6"/>
<text x="1092.5" y="696.75" font-size="11.5" fill="#9a9a9a" textLength="108.5" lengthAdjust="spacingAndGlyphs" font-style="italic">Enter a VB expression</text>
<line x1="288.5" y1="733.25" x2="1404" y2="733.25" stroke="#e1e6ec" stroke-width="1.3"/>
<line x1="765.5" y1="706.1" x2="765.5" y2="733.25" stroke="#e4e8ee" stroke-width="1.2"/>
<line x1="925.5" y1="706.1" x2="925.5" y2="733.25" stroke="#e4e8ee" stroke-width="1.2"/>
<text x="289.6" y="723.9" font-size="12" fill="#333" stroke="#333" stroke-width="0.22" textLength="23" lengthAdjust="spacingAndGlyphs">card</text>
<text x="767.5" y="723.9" font-size="12" fill="#333" stroke="#333" stroke-width="0.22" textLength="31" lengthAdjust="spacingAndGlyphs">String</text>
<text x="927.5" y="723.9" font-size="12" fill="#333" stroke="#333" stroke-width="0.22" textLength="27" lengthAdjust="spacingAndGlyphs">Body</text>
<rect x="1087" y="708.4" width="314.5" height="22.5" fill="#fff" stroke="#d8dfe8" stroke-width="1.6"/>
<text x="1092.5" y="723.9" font-size="11.5" fill="#9a9a9a" textLength="108.5" lengthAdjust="spacingAndGlyphs" font-style="italic">Enter a VB expression</text>
<line x1="288.5" y1="760.4" x2="1404" y2="760.4" stroke="#e1e6ec" stroke-width="1.3"/>
<line x1="765.5" y1="733.25" x2="765.5" y2="760.4" stroke="#e4e8ee" stroke-width="1.2"/>
<line x1="925.5" y1="733.25" x2="925.5" y2="760.4" stroke="#e4e8ee" stroke-width="1.2"/>
<text x="289.6" y="751.05" font-size="12" fill="#333" stroke="#333" stroke-width="0.22" textLength="58" lengthAdjust="spacingAndGlyphs">documents</text>
<text x="767.5" y="751.05" font-size="12" fill="#333" stroke="#333" stroke-width="0.22" textLength="31" lengthAdjust="spacingAndGlyphs">String</text>
<text x="927.5" y="751.05" font-size="12" fill="#333" stroke="#333" stroke-width="0.22" textLength="27" lengthAdjust="spacingAndGlyphs">Body</text>
<rect x="1087" y="735.55" width="314.5" height="22.5" fill="#fff" stroke="#d8dfe8" stroke-width="1.6"/>
<text x="1092.5" y="751.05" font-size="11.5" fill="#9a9a9a" textLength="108.5" lengthAdjust="spacingAndGlyphs" font-style="italic">Enter a VB expression</text>
<line x1="288.5" y1="787.55" x2="1404" y2="787.55" stroke="#e1e6ec" stroke-width="1.3"/>
<line x1="765.5" y1="760.4" x2="765.5" y2="787.55" stroke="#e4e8ee" stroke-width="1.2"/>
<line x1="925.5" y1="760.4" x2="925.5" y2="787.55" stroke="#e4e8ee" stroke-width="1.2"/>
<text x="289.6" y="778.1999999999999" font-size="12" fill="#333" stroke="#333" stroke-width="0.22" textLength="27.5" lengthAdjust="spacingAndGlyphs">bank</text>
<text x="767.5" y="778.1999999999999" font-size="12" fill="#333" stroke="#333" stroke-width="0.22" textLength="31" lengthAdjust="spacingAndGlyphs">String</text>
<text x="927.5" y="778.1999999999999" font-size="12" fill="#333" stroke="#333" stroke-width="0.22" textLength="27" lengthAdjust="spacingAndGlyphs">Body</text>
<rect x="1087" y="762.6999999999999" width="314.5" height="22.5" fill="#fff" stroke="#d8dfe8" stroke-width="1.6"/>
<text x="1092.5" y="778.1999999999999" font-size="11.5" fill="#9a9a9a" textLength="108.5" lengthAdjust="spacingAndGlyphs" font-style="italic">Enter a VB expression</text>
<rect x="288.5" y="786.7" width="1115" height="27" fill="#fde3a2"/>
<line x1="765.5" y1="787.55" x2="765.5" y2="814.6999999999999" stroke="#e4e8ee" stroke-width="1.2"/>
<line x1="925.5" y1="787.55" x2="925.5" y2="814.6999999999999" stroke="#e4e8ee" stroke-width="1.2"/>
<text x="289.6" y="805.3499999999999" font-size="12" fill="#333" stroke="#333" stroke-width="0.22" textLength="33.5" lengthAdjust="spacingAndGlyphs">phone</text>
<text x="767.5" y="805.3499999999999" font-size="12" fill="#333" stroke="#333" stroke-width="0.22" textLength="31" lengthAdjust="spacingAndGlyphs">String</text>
<text x="927.5" y="805.3499999999999" font-size="12" fill="#333" stroke="#333" stroke-width="0.22" textLength="27" lengthAdjust="spacingAndGlyphs">Body</text>
<rect x="1087" y="789.55" width="315" height="23" fill="#fde0a0" stroke="#e6cf9c" stroke-width="1.2"/>
<text x="1092.5" y="805.3499999999999" font-size="11.5" fill="#9a9a9a" textLength="108.5" lengthAdjust="spacingAndGlyphs" font-style="italic">Enter a VB expression</text>
<rect x="289" y="787" width="476" height="26.6" fill="none" stroke="#555" stroke-width="1" stroke-dasharray="1,1.2"/>
<text x="289" y="826.5" font-size="12" fill="#aaaaaa" textLength="79" lengthAdjust="spacingAndGlyphs" font-style="italic" clip-path="url(#cvclip)">Create Variable</text>
<clipPath id="cvclip"><rect x="287" y="814" width="400" height="12.3"/></clipPath>
<rect x="1404.5" y="597.5" width="17" height="229" fill="#f0f0f0"/>
<rect x="1405.8" y="598.5" width="14" height="14.5" fill="#fff" stroke="#c9c9c9" stroke-width="1"/>
<path d="M1409.5,607.5 L1412.8,604 L1416,607.5 Z" fill="#9a9a9a"/>
<rect x="1406.3" y="615.8" width="13.5" height="171.5" fill="#fff" stroke="#bdbdbd" stroke-width="1"/>
<rect x="1405.8" y="810.5" width="14" height="15" fill="#fff" stroke="#c9c9c9" stroke-width="1"/>
<path d="M1409.5,816 L1416,816 L1412.8,819.5 Z" fill="#9a9a9a"/>
<line x1="287" y1="826.8" x2="1421" y2="826.8" stroke="#cfcfcf" stroke-width="1.2"/>
<rect x="287" y="827.4" width="1134.5" height="22.6" fill="#f0f0f0"/>
<rect x="287" y="828.6" width="58" height="20.6" fill="#fff"/>
<text x="292.7" y="843.5" font-size="12" fill="#3d87d0" stroke="#3d87d0" stroke-width="0.22" textLength="47.7" lengthAdjust="spacingAndGlyphs">Variables</text>
<text x="357.7" y="843.5" font-size="12" fill="#333" stroke="#333" stroke-width="0.22" textLength="57" lengthAdjust="spacingAndGlyphs">Arguments</text>
<text x="431.7" y="843.5" font-size="12" fill="#333" stroke="#333" stroke-width="0.22" textLength="40.7" lengthAdjust="spacingAndGlyphs">Imports</text>
<path d="M1241.5,838 L1240,834.5 Q1240.5,833 1242,834 L1243.5,837 L1243,831.5 Q1244,830.5 1245,831.5 L1245.8,836.5 L1246.5,830.5 Q1247.5,829.8 1248.3,830.8 L1248.3,836.5 L1249.5,831.8 Q1250.5,831 1251.3,832 L1250.8,838 L1252.5,835.5 Q1253.8,835.3 1253.8,836.5 L1251,843 Q1249.5,846.5 1246,846.5 Q1242.5,846.5 1242,843 Z" fill="#2b2b2b"/>
<circle cx="1274.8" cy="835.8" r="3.6" fill="none" stroke="#333" stroke-width="1.8"/>
<line x1="1272.3" y1="838.5" x2="1266.5" y2="844.5" stroke="#333" stroke-width="2.2"/>
<rect x="1289.5" y="829.8" width="75.2" height="20" fill="#fff"/>
<text x="1295" y="843.8" font-size="12" fill="#333" stroke="#333" stroke-width="0.22" textLength="27.3" lengthAdjust="spacingAndGlyphs">100%</text>
<path d="M1354,838.2 L1357,841 L1360,838.2" fill="none" stroke="#555" stroke-width="1.1"/>
<g fill="none" stroke="#333" stroke-width="1.8"><path d="M1376.5,836 L1376.5,832.5 L1380,832.5 M1386,832.5 L1389.5,832.5 L1389.5,836 M1389.5,842 L1389.5,845.5 L1386,845.5 M1380,845.5 L1376.5,845.5 L1376.5,842"/><path d="M1377,833 L1380.5,836.5 M1389,833 L1385.5,836.5 M1389,845 L1385.5,841.5 M1377,845 L1380.5,841.5" stroke-width="1.3"/></g>
<rect x="1380.5" y="836.5" width="5" height="5" fill="#bbb"/>
<rect x="1402.3" y="832.3" width="13" height="14" fill="#ddd" stroke="#333" stroke-width="1.5"/>
<circle cx="1408.8" cy="835.5" r="1" fill="#333"/>
<circle cx="1408.8" cy="843" r="1" fill="#333"/>
<circle cx="1405" cy="839.3" r="1" fill="#333"/>
<circle cx="1412.6" cy="839.3" r="1" fill="#333"/>
<rect x="286.2" y="648.3" width="97.3" height="168" fill="none" stroke="#f50d0d" stroke-width="2.4" rx="0.5"/>
<rect x="1429.5" y="137.5" width="466" height="23" fill="#f2f2f2"/>
<line x1="1429.5" y1="137.5" x2="1429.5" y2="161" stroke="#d6d6d6" stroke-width="1"/>
<line x1="1429.5" y1="137.5" x2="1895" y2="137.5" stroke="#dedede" stroke-width="1"/>
<text x="1435" y="153.2" font-size="12" fill="#666" stroke="#666" stroke-width="0.1" textLength="53" lengthAdjust="spacingAndGlyphs">Properties</text>
<pattern id="g2" x="1497.4" y="147" width="4" height="4" patternUnits="userSpaceOnUse"><rect width="4" height="4" fill="#f2f2f2"/><rect x="0" y="0" width="1.3" height="1.3" fill="#d6d6d6"/><rect x="2" y="2" width="1.3" height="1.3" fill="#d6d6d6"/></pattern>
<rect x="1497.4" y="147" width="379.3" height="5.4" fill="url(#g2)"/>
<path d="M1884.7,148.25 L1892.7,148.25 L1888.7,152.75 Z" fill="#555"/>
<rect x="1430.3" y="160.5" width="465" height="329" fill="#fff"/>
<rect x="1430.3" y="160.5" width="465" height="47.7" fill="#f2f2f2"/>
<line x1="1430.5" y1="160.5" x2="1895" y2="160.5" stroke="#c3c3c3" stroke-width="1.3"/>
<line x1="1430.6" y1="160.5" x2="1430.6" y2="490" stroke="#9d9d9d" stroke-width="1.3"/>
<line x1="1430" y1="489.6" x2="1895" y2="489.6" stroke="#a8a8a8" stroke-width="1.3"/>
<text x="1433" y="177" font-size="12" fill="#333" stroke="#333" stroke-width="0.22" textLength="292.5" lengthAdjust="spacingAndGlyphs">System.Activities.Presentation.View.DesignTimeVariable</text>
<line x1="1431" y1="189.5" x2="1895" y2="189.5" stroke="#8e8e8e" stroke-width="1.2" stroke-dasharray="1.5,1.5"/>
<line x1="1431" y1="208.2" x2="1895" y2="208.2" stroke="#8e8e8e" stroke-width="1.2" stroke-dasharray="1.5,1.5"/>
<line x1="1431.5" y1="189.5" x2="1431.5" y2="208.2" stroke="#8e8e8e" stroke-width="1.2" stroke-dasharray="1.5,1.5"/>
<rect x="1433.5" y="194.8" width="8.3" height="8.3" fill="#fff" stroke="#444" stroke-width="1.2"/>
<line x1="1435.5" y1="199" x2="1439.8" y2="199" stroke="#444" stroke-width="1.2"/>
<text x="1448.7" y="203.2" font-size="12" fill="#111" textLength="25" lengthAdjust="spacingAndGlyphs" font-weight="bold">Misc</text>
<rect x="1431.2" y="208.7" width="12.5" height="117" fill="#f0f0f0"/>
<line x1="1444" y1="234.3" x2="1726" y2="234.3" stroke="#ececec" stroke-width="1.2"/>
<line x1="1444" y1="257" x2="1726" y2="257" stroke="#ececec" stroke-width="1.2"/>
<line x1="1444" y1="280.2" x2="1726" y2="280.2" stroke="#ececec" stroke-width="1.2"/>
<line x1="1444" y1="303" x2="1726" y2="303" stroke="#ececec" stroke-width="1.2"/>
<line x1="1444" y1="326" x2="1726" y2="326" stroke="#ececec" stroke-width="1.2"/>
<text x="1450.6" y="227.5" font-size="12" fill="#333" stroke="#333" stroke-width="0.22" textLength="38" lengthAdjust="spacingAndGlyphs">Default</text>
<text x="1450.6" y="250.5" font-size="12" fill="#333" stroke="#333" stroke-width="0.22" textLength="50" lengthAdjust="spacingAndGlyphs">Modifiers</text>
<text x="1450.6" y="273.5" font-size="12" fill="#333" stroke="#333" stroke-width="0.22" textLength="31.5" lengthAdjust="spacingAndGlyphs">Name</text>
<text x="1450.6" y="297" font-size="12" fill="#333" stroke="#333" stroke-width="0.22" textLength="32.5" lengthAdjust="spacingAndGlyphs">Scope</text>
<text x="1450.6" y="319.5" font-size="12" fill="#333" stroke="#333" stroke-width="0.22" textLength="24.5" lengthAdjust="spacingAndGlyphs">Type</text>
<linearGradient id="cmb" x1="0" y1="0" x2="0" y2="1"><stop offset="0" stop-color="#f3f3f3"/><stop offset="1" stop-color="#e3e3e3"/></linearGradient>
<rect x="1727" y="210.5" width="165.5" height="21.3" fill="#fff" stroke="#c9d4e0" stroke-width="1.3"/>
<rect x="1893" y="210.5" width="4" height="21.3" fill="#e8e8e8" stroke="#bbb" stroke-width="1"/>
<text x="1732.5" y="225.8" font-size="11.5" fill="#999" textLength="108.5" lengthAdjust="spacingAndGlyphs" font-style="italic">Enter a VB expression</text>
<rect x="1726.5" y="234.5" width="170" height="21.5" fill="#fff" stroke="#cfcfcf" stroke-width="1.2"/>
<text x="1730.8" y="249.8" font-size="12" fill="#222" stroke="#222" stroke-width="0.22" textLength="28.5" lengthAdjust="spacingAndGlyphs">None</text>
<rect x="1726.5" y="256.8" width="170" height="22.5" fill="#fff" stroke="#cfcfcf" stroke-width="1.2"/>
<text x="1730.8" y="272.7" font-size="12" fill="#222" stroke="#222" stroke-width="0.22" textLength="31.5" lengthAdjust="spacingAndGlyphs">phone</text>
<rect x="1726.5" y="281.5" width="170" height="20.3" fill="url(#cmb)" stroke="#bdbdbd" stroke-width="1.2"/>
<text x="1732.5" y="296.7" font-size="12" fill="#222" stroke="#222" stroke-width="0.22" textLength="27" lengthAdjust="spacingAndGlyphs">Body</text>
<rect x="1726.5" y="303.8" width="170" height="20.7" fill="url(#cmb)" stroke="#bdbdbd" stroke-width="1.2"/>
<text x="1730" y="318.3" font-size="12" fill="#222" stroke="#222" stroke-width="0.22" textLength="31" lengthAdjust="spacingAndGlyphs">String</text>
<rect x="1429.5" y="497" width="466" height="353.5" fill="#fff" stroke="#d6d6d6" stroke-width="1"/>
<rect x="1430" y="497.5" width="465" height="22" fill="#f2f2f2"/>
<text x="1435" y="513" font-size="12" fill="#666" stroke="#666" stroke-width="0.1" textLength="38.5" lengthAdjust="spacingAndGlyphs">Outline</text>
<pattern id="g3" x="1482.4" y="507.5" width="4" height="4" patternUnits="userSpaceOnUse"><rect width="4" height="4" fill="#f2f2f2"/><rect x="0" y="0" width="1.3" height="1.3" fill="#d6d6d6"/><rect x="2" y="2" width="1.3" height="1.3" fill="#d6d6d6"/></pattern>
<rect x="1482.4" y="507.5" width="393.4" height="5.4" fill="url(#g3)"/>
<path d="M1884.6,508.55 L1892.6,508.55 L1888.6,513.05 Z" fill="#555"/>
<path d="M1443.5,526.3 L1443.5,532.3 L1437.5,532.3 Z" fill="#3a3a3a"/>
<text x="1450.5" y="533.8" font-size="12" fill="#151515" stroke="#151515" stroke-width="0.45" textLength="21.5" lengthAdjust="spacingAndGlyphs">RPA</text>
<path d="M1462.2,542.3 L1462.2,548.3 L1456.2,548.3 Z" fill="#3a3a3a"/>
<g transform="translate(1474.5,537.8)"><rect x="2.5" y="6" width="8.5" height="5.5" fill="#d4d4d4"/><path d="M3.8,4.7 L1.2,5.8 L1.2,11.7 L3.8,12.8 M9.7,4.7 L12.3,5.8 L12.3,11.7 L9.7,12.8" fill="none" stroke="#4a4a4a" stroke-width="1.6"/><path d="M6.75,0 L6.75,4" stroke="#4a4a4a" stroke-width="1.6"/><path d="M4,3.4 L9.5,3.4 L6.75,6.6 Z" fill="#4a4a4a"/><path d="M6.75,9.5 L6.75,13" stroke="#4a4a4a" stroke-width="1.6"/><path d="M4,12.3 L9.5,12.3 L6.75,15.5 Z" fill="#4a4a4a"/></g>
<text x="1491.7" y="549.7" font-size="12" fill="#151515" stroke="#151515" stroke-width="0.45" textLength="21.5" lengthAdjust="spacingAndGlyphs">RPA</text>
<path d="M1482.0,558.3 L1482.0,564.3 L1476.0,564.3 Z" fill="#3a3a3a"/>
<rect x="1492.2" y="553.5" width="15.3" height="15.3" fill="#fff" stroke="#999" stroke-width="1"/>
<circle cx="1499.8" cy="561" r="4.5" fill="none" stroke="#d4d4d4" stroke-width="0.9"/>
<line x1="1499.8" y1="561" x2="1499.8" y2="557.8" stroke="#ccc" stroke-width="0.8"/>
<text x="1511" y="566.2" font-size="12" fill="#151515" stroke="#151515" stroke-width="0.45" textLength="82" lengthAdjust="spacingAndGlyphs">Monitor events</text>
<path d="M1497.3,576 L1500.8,579.5 L1497.3,583 Z" fill="none" stroke="#9a9a9a" stroke-width="0.9"/>
<text x="1508.5" y="581.6" font-size="12" fill="#151515" stroke="#151515" stroke-width="0.45" textLength="80" lengthAdjust="spacingAndGlyphs">RepeatForever</text>
<path d="M1500.6000000000001,590.3 L1500.6000000000001,596.3 L1494.6000000000001,596.3 Z" fill="#3a3a3a"/>
<g transform="translate(1511.8,585.8)"><rect x="2.5" y="6" width="8.5" height="5.5" fill="#d4d4d4"/><path d="M3.8,4.7 L1.2,5.8 L1.2,11.7 L3.8,12.8 M9.7,4.7 L12.3,5.8 L12.3,11.7 L9.7,12.8" fill="none" stroke="#4a4a4a" stroke-width="1.6"/><path d="M6.75,0 L6.75,4" stroke="#4a4a4a" stroke-width="1.6"/><path d="M4,3.4 L9.5,3.4 L6.75,6.6 Z" fill="#4a4a4a"/><path d="M6.75,9.5 L6.75,13" stroke="#4a4a4a" stroke-width="1.6"/><path d="M4,12.3 L9.5,12.3 L6.75,15.5 Z" fill="#4a4a4a"/></g>
<text x="1530.2" y="597.6" font-size="12" fill="#151515" stroke="#151515" stroke-width="0.45" textLength="76" lengthAdjust="spacingAndGlyphs">Event handler</text>
<path d="M1532,601.5 L1541.5,601.5 L1545,605 L1545,616.5 L1532,616.5 Z" fill="#fff" stroke="#8fcf6a" stroke-width="1"/>
<rect x="1530.5" y="606" width="6" height="3" fill="#aaa"/>
<text x="1549.4" y="613.5" font-size="12" fill="#151515" stroke="#151515" stroke-width="0.45" textLength="52.5" lengthAdjust="spacingAndGlyphs">Read CSV</text>
<path d="M1519.2,622.3 L1519.2,628.3 L1513.2,628.3 Z" fill="#3a3a3a"/>
<g transform="translate(1529,617.5) scale(1.0)"><rect x="8" y="0.5" width="7.5" height="8" fill="#fff" stroke="#5b9bd5" stroke-width="0.9"/><line x1="11.7" y1="0.5" x2="11.7" y2="8.5" stroke="#5b9bd5" stroke-width="0.8"/><line x1="8" y1="3.2" x2="15.5" y2="3.2" stroke="#5b9bd5" stroke-width="0.8"/><line x1="8" y1="5.9" x2="15.5" y2="5.9" stroke="#5b9bd5" stroke-width="0.8"/><path d="M1,5 L1,14.5 Q1,17 6,17 Q11,17 11,14.5 L11,5" fill="#fff" stroke="#555" stroke-width="1.1"/><ellipse cx="6" cy="5" rx="5" ry="2.3" fill="#fff" stroke="#555" stroke-width="1.1"/><path d="M1,8.3 Q1,10.6 6,10.6 Q11,10.6 11,8.3 M1,11.6 Q1,13.9 6,13.9 Q11,13.9 11,11.6" fill="none" stroke="#555" stroke-width="1"/></g>
<text x="1549.4" y="629.5" font-size="12" fill="#151515" stroke="#151515" stroke-width="0.45" textLength="70" lengthAdjust="spacingAndGlyphs">For each row</text>
<path d="M1537.8,638.3 L1537.8,644.3 L1531.8,644.3 Z" fill="#3a3a3a"/>
<text x="1546.2" y="645.4" font-size="12" fill="#151515" stroke="#151515" stroke-width="0.45" textLength="27.5" lengthAdjust="spacingAndGlyphs">Body</text>
<path d="M1557.7,654.3 L1557.7,660.3 L1551.7,660.3 Z" fill="#3a3a3a"/>
<g transform="translate(1569,650)"><rect x="2.5" y="6" width="8.5" height="5.5" fill="#d4d4d4"/><path d="M3.8,4.7 L1.2,5.8 L1.2,11.7 L3.8,12.8 M9.7,4.7 L12.3,5.8 L12.3,11.7 L9.7,12.8" fill="none" stroke="#4a4a4a" stroke-width="1.6"/><path d="M6.75,0 L6.75,4" stroke="#4a4a4a" stroke-width="1.6"/><path d="M4,3.4 L9.5,3.4 L6.75,6.6 Z" fill="#4a4a4a"/><path d="M6.75,9.5 L6.75,13" stroke="#4a4a4a" stroke-width="1.6"/><path d="M4,12.3 L9.5,12.3 L6.75,15.5 Z" fill="#4a4a4a"/></g>
<text x="1586.6" y="661.4" font-size="12" fill="#151515" stroke="#151515" stroke-width="0.45" textLength="27.5" lengthAdjust="spacingAndGlyphs">Body</text>
<g transform="translate(1586.5,665.5) scale(1.0)"><rect x="8" y="0.5" width="7.5" height="8" fill="#fff" stroke="#5b9bd5" stroke-width="0.9"/><line x1="11.7" y1="0.5" x2="11.7" y2="8.5" stroke="#5b9bd5" stroke-width="0.8"/><line x1="8" y1="3.2" x2="15.5" y2="3.2" stroke="#5b9bd5" stroke-width="0.8"/><line x1="8" y1="5.9" x2="15.5" y2="5.9" stroke="#5b9bd5" stroke-width="0.8"/><path d="M1,5 L1,14.5 Q1,17 6,17 Q11,17 11,14.5 L11,5" fill="#fff" stroke="#555" stroke-width="1.1"/><ellipse cx="6" cy="5" rx="5" ry="2.3" fill="#fff" stroke="#555" stroke-width="1.1"/><path d="M1,8.3 Q1,10.6 6,10.6 Q11,10.6 11,8.3 M1,11.6 Q1,13.9 6,13.9 Q11,13.9 11,11.6" fill="none" stroke="#555" stroke-width="1"/></g>
<text x="1606" y="677.3" font-size="12" fill="#151515" stroke="#151515" stroke-width="0.45" textLength="69" lengthAdjust="spacingAndGlyphs">Get row item</text></svg></body></html>
